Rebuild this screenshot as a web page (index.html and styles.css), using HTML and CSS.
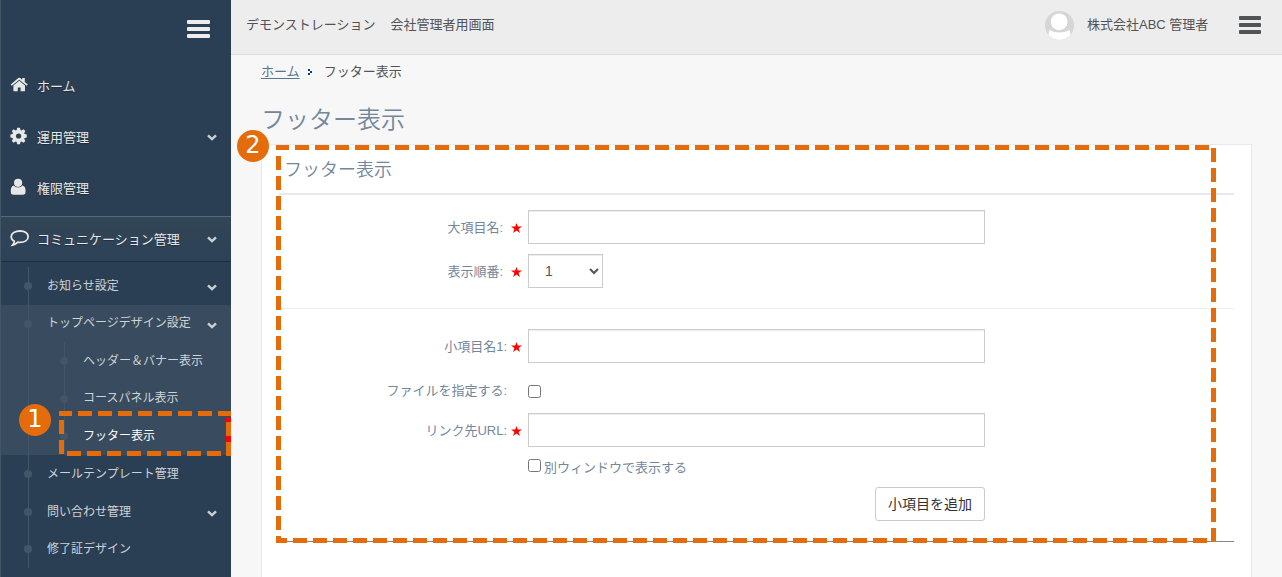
FILE: index.html
```html
<!DOCTYPE html>
<html lang="ja">
<head>
  <meta charset="UTF-8">
  <meta name="viewport" content="width=device-width, initial-scale=1.0">
  <title>フッター表示</title>
  <link rel="stylesheet" href="styles.css">
</head>
<body>
  <svg class="defs" width="0" height="0">
    <symbol id="chevron" viewBox="0 0 10 7"><path d="M1 1.4 L5 5.2 L9 1.4" fill="none" stroke="currentColor" stroke-width="2.4"/></symbol>
    <symbol id="star" viewBox="0 0 11 10"><path fill="red" d="M5.5 0 L6.8 3.6 H11 L7.6 6 L8.9 10 L5.5 7.6 L2.1 10 L3.4 6 L0 3.6 H4.2 Z"/></symbol>
  </svg>
  <div class="container">
    <nav class="sidebar">
      <div class="nav-toggle"><span class="bars"><i></i><i></i><i></i></span></div>
      <ul class="side-menu">
        <li class="item">
          <svg class="icon" width="20" height="18" viewBox="0 0 20 18"><path fill="currentColor" d="M10.2 4.7 L16 9.5 V14.6 Q16 15.2 15.4 15.2 H11.6 V11.6 H8.8 V15.2 H5 Q4.4 15.2 4.4 14.6 V9.5 Z M9.2 2.1 Q10.2 1.3 11.2 2.1 L13.2 3.8 V2 H15.8 V6 L18.8 8.6 L17.7 9.8 L10.2 3.7 L2.8 9.8 L1.7 8.6 Z"/></svg>
          <span>ホーム</span>
        </li>
        <li class="item">
          <svg class="icon" width="20" height="18" viewBox="0 0 20 18"><path fill="currentColor" fill-rule="evenodd" d="M8.2 0.8 H11 L11.5 3 L12.6 3.4 L14.5 2.2 L16.4 4.1 L15.2 6 L15.7 7.1 L17.8 7.6 V10.4 L15.7 10.9 L15.2 12 L16.4 13.9 L14.5 15.8 L12.6 14.6 L11.5 15 L11 17.2 H8.2 L7.7 15 L6.6 14.6 L4.7 15.8 L2.8 13.9 L4 12 L3.5 10.9 L1.4 10.4 V7.6 L3.5 7.1 L4 6 L2.8 4.1 L4.7 2.2 L6.6 3.4 L7.7 3 Z M9.6 6.4 A2.6 2.6 0 1 0 9.6 11.6 A2.6 2.6 0 1 0 9.6 6.4 Z"/></svg>
          <span>運用管理</span>
          <svg class="chevron" width="10" height="7"><use href="#chevron"/></svg>
        </li>
        <li class="item">
          <svg class="icon" width="20" height="18" viewBox="0 0 20 18"><path fill="currentColor" d="M4.6 7.6 Q6.6 9.6 9.1 9.6 Q11.6 9.6 13.6 7.6 Q16.7 8.4 16.6 13.4 Q16.4 16.6 14 16.8 H4.4 Q1.8 16.5 1.8 13.4 Q1.7 8.4 4.6 7.6 Z"/><circle cx="9.1" cy="4.8" r="4.1" fill="currentColor"/></svg>
          <span>権限管理</span>
        </li>
        <li class="item active">
          <svg class="icon" width="20" height="18" viewBox="0 0 20 18"><path fill="none" stroke="currentColor" stroke-width="1.8" d="M11 2 C15.8 2 19.1 4.3 19.1 7.7 C19.1 11.1 15.8 13.4 11 13.4 Q9.8 13.4 8.8 13.2 Q6.6 15.6 3.6 16 Q5.2 14.2 5.3 12.2 Q2.2 10.5 2.2 7.7 C2.2 4.3 6.2 2 11 2 Z"/></svg>
          <span>コミュニケーション管理</span>
          <svg class="chevron" width="10" height="7"><use href="#chevron"/></svg>
        </li>
      </ul>
      <ul class="child-menu">
        <li>お知らせ設定 <svg class="chevron" width="10" height="7"><use href="#chevron"/></svg></li>
        <li class="open">トップページデザイン設定 <svg class="chevron" width="10" height="7"><use href="#chevron"/></svg></li>
        <li class="open nested">
          <ul class="grandchild-menu">
            <li>ヘッダー＆バナー表示</li>
            <li>コースパネル表示</li>
            <li class="current">フッター表示</li>
          </ul>
        </li>
        <li>メールテンプレート管理</li>
        <li>問い合わせ管理 <svg class="chevron" width="10" height="7"><use href="#chevron"/></svg></li>
        <li>修了証デザイン</li>
      </ul>
    </nav>

    <div class="main">
      <header class="top-nav">
        <div class="site-name"><span>デモンストレーション</span><span>会社管理者用画面</span></div>
        <svg class="avatar" width="29" height="29" viewBox="0 0 29 29">
          <circle cx="14.5" cy="14.5" r="14.5" fill="#d6d6d6"/>
          <path fill="#fff" d="M4.4 19 Q9 21.5 14.5 21.5 Q20 21.5 24.6 19 L25.6 23.8 A14.5 14.5 0 0 1 3.4 23.8 Z"/>
          <circle cx="14.1" cy="10.8" r="9.2" fill="#fff" stroke="#d6d6d6" stroke-width="1.6"/>
        </svg>
        <div class="user-name">株式会社ABC 管理者</div>
        <span class="bars dark"><i></i><i></i><i></i></span>
      </header>

      <div class="content">
        <div class="breadcrumb">
          <a>ホーム</a>
          <svg width="5" height="6" viewBox="0 0 5 6" shape-rendering="crispEdges"><path fill="#003b7d" d="M0 0h2v2h-2z M2 2h2v2h-2z M0 4h2v2h-2z"/></svg>
          <span>フッター表示</span>
        </div>
        <h1 class="page-title">フッター表示</h1>
        <div class="panel">
          <h2 class="panel-title">フッター表示</h2>
          <form class="footer-form">
            <div class="form-row">
              <label class="wide-gap" for="mainItem">大項目名:</label>
              <svg class="star" width="11" height="10"><use href="#star"/></svg>
              <input type="text" id="mainItem" class="text-input">
            </div>
            <div class="form-row">
              <label class="wide-gap" for="sortOrder">表示順番:</label>
              <svg class="star" width="11" height="10"><use href="#star"/></svg>
              <select id="sortOrder" class="order-select"><option>1</option></select>
            </div>
            <hr class="divider">
            <div class="form-row">
              <label for="subItem">小項目名1:</label>
              <svg class="star" width="11" height="10"><use href="#star"/></svg>
              <input type="text" id="subItem" class="text-input">
            </div>
            <div class="form-row check-row">
              <label for="useFile">ファイルを指定する:</label>
              <span></span>
              <input type="checkbox" id="useFile" class="check">
            </div>
            <div class="form-row">
              <label for="linkUrl">リンク先URL:</label>
              <svg class="star" width="11" height="10"><use href="#star"/></svg>
              <input type="text" id="linkUrl" class="text-input">
            </div>
            <div class="window-row">
              <input type="checkbox" id="newWindow" class="check"><label for="newWindow">別ウィンドウで表示する</label>
            </div>
            <div class="button-row"><button type="button" class="add-button">小項目を追加</button></div>
            <hr class="divider bottom">
          </form>
        </div>
      </div>
    </div>
  </div>

  <!-- 説明用の枠と番号 -->
  <svg class="guide" width="1282" height="577" fill="none" stroke="#e46c0a" stroke-width="5">
    <path stroke="red" d="M228.5 417.5 V442"/>
    <g stroke-dasharray="14 6">
      <path stroke-dashoffset="1" d="M59 413.5 H231"/>
      <path d="M61.5 420 V454"/>
      <path d="M67 453.5 H226"/>
      <path d="M228.5 422 V456"/>
      <path stroke-dashoffset="1" d="M276 147.5 H1210"/>
      <path d="M1213.5 148 V542"/>
      <path stroke-dashoffset="3" d="M276 540.5 H1210"/>
      <path d="M278.5 156 V543"/>
    </g>
  </svg>
  <div class="badge badge-1">1</div>
  <div class="badge badge-2">2</div>
</body>
</html>
```
FILE: styles.css
```css
* {
  box-sizing: border-box;
}
body {
  margin: 0;
  height: 577px;
  overflow: hidden;
  position: relative;
  font-family: "Liberation Sans", "Noto Sans CJK JP", sans-serif;
  font-size: 13px;
  color: #73879c;
  background-color: #f7f7f7;
}
ul {
  list-style: none;
  margin: 0;
  padding: 0;
}
.defs {
  position: absolute;
}
.container {
  display: flex;
  height: 577px;
}

/* サイドバー */
.sidebar {
  width: 231px;
  flex: none;
  background-color: #2a3f54;
  border-left: 1px solid #435668;
  color: #e7e7e7;
}
.nav-toggle {
  display: flex;
  justify-content: flex-end;
  height: 63px;
  padding: 20px 21px 0 0;
}
.bars {
  display: flex;
  flex-direction: column;
  gap: 3px;
  width: 23px;
}
.bars i {
  height: 4px;
  border-radius: 1px;
  background-color: #ececec;
}
.bars.dark {
  width: 22px;
}
.bars.dark i {
  background-color: #515356;
}
.item {
  display: flex;
  align-items: center;
  height: 46px;
  margin-bottom: 5px;
  padding: 0 14px 0 8px;
  text-shadow: 0 1px 1px rgba(0, 0, 0, 0.3);
}
.item .icon {
  margin-right: 8px;
  margin-top: -2px;
}
.item span {
  margin-top: -2px;
}
.item.active {
  margin-bottom: 0;
  border-top: 1px solid #56697a;
  border-bottom: 1px solid #1d3145;
  background: linear-gradient(#334556, #2c4257);
}
.chevron {
  margin-left: auto;
  color: #c9d0d6;
}
.child-menu {
  margin-top: 5px;
  color: #ced3d8;
  font-size: 12px;
  position: relative;
}
.child-menu li {
  display: flex;
  align-items: center;
  height: 37.5px;
  padding: 0 14px 3px 46px;
  position: relative;
}
.child-menu li .chevron {
  margin-top: 7px;
}
.child-menu li.open {
  background-color: #394b5e;
}
.child-menu li.nested {
  display: block;
  height: 113.4px;
  padding: 0;
}
.grandchild-menu li {
  padding-left: 82px;
}
.grandchild-menu li.current {
  color: #fff;
}
/* ツリーの縦線と丸 */
.child-menu::before,
.grandchild-menu::before {
  content: "";
  position: absolute;
  z-index: 1;
  left: 27px;
  top: 0;
  bottom: 0;
  width: 1px;
  background-color: #425668;
}
.grandchild-menu::before {
  left: 63px;
}
.child-menu li:not(.nested)::before {
  content: "";
  position: absolute;
  z-index: 2;
  left: 23px;
  top: 15px;
  width: 8px;
  height: 8px;
  border-radius: 50%;
  background-color: #425668;
}
.grandchild-menu li:not(.nested)::before {
  left: 59px;
}

/* ヘッダー */
.main {
  flex: 1;
}
.top-nav {
  display: flex;
  align-items: center;
  height: 55px;
  padding: 0 21px 5px 15px;
  background-color: #ededed;
  border-bottom: 1px solid #d9dee4;
  color: #515356;
}
.site-name {
  display: flex;
  gap: 15px;
  margin-top: -2px;
}
.avatar {
  margin-left: auto;
  margin-right: 13px;
  margin-top: 1px;
}
.user-name {
  width: 122px;
  margin-right: 30px;
  margin-top: -2px;
  white-space: nowrap;
}
.content {
  padding: 0 30px;
}
.breadcrumb {
  display: flex;
  align-items: center;
  height: 33px;
  padding-bottom: 2px;
  color: #515356;
}
.breadcrumb a {
  color: #5a738e;
  text-decoration: underline;
  text-underline-offset: 2px;
}
.breadcrumb svg {
  margin: 2px 11px 0 8px;
}
.page-title {
  height: 56px;
  margin: 0;
  padding-top: 15px;
  font-size: 24px;
  font-weight: 350;
  line-height: 34px;
}
.panel {
  width: 991px;
  height: 460px;
  padding: 0 17px;
  background-color: #fff;
  border: 1px solid #e6e9ed;
}
.panel-title {
  height: 50px;
  margin: 0;
  padding: 10px 0 0 5px;
  border-bottom: 2px solid #e6e9ed;
  font-size: 18px;
  font-weight: 350;
  line-height: 30px;
}

/* フォーム */
.footer-form {
  padding-top: 15px;
}
.form-row {
  display: grid;
  grid-template-columns: 228px 11px 1fr;
  align-items: center;
  column-gap: 4px;
  height: 34px;
  margin-bottom: 10px;
}
.form-row label {
  padding-bottom: 2px;
  text-align: right;
  white-space: nowrap;
}
.form-row label.wide-gap {
  padding-right: 4px;
}
.star {
  margin-top: 1px;
}
.text-input,
.order-select {
  width: 457px;
  height: 34px;
  margin-left: 2px;
  padding: 6px 12px;
  border: 1px solid #ccc;
  border-radius: 0;
  background-color: #fff;
  box-shadow: inset 0 1px 1px rgba(0, 0, 0, 0.075);
  color: #555;
  font-family: inherit;
  font-size: 14px;
}
.order-select {
  width: 75px;
  padding: 0 1px 0 12px;
}
.divider {
  height: 1px;
  margin: 20px 0;
  border: 0;
  background-color: #eee;
}
.divider.bottom {
  background-color: #858585;
}
.form-row.check-row {
  height: 30px;
}
.check-row label {
  padding: 2px 0 0;
}
.check {
  width: 13px;
  height: 13px;
  margin: 0;
}
.check-row .check {
  margin: 6px 0 0 2px;
}
.window-row {
  display: flex;
  align-items: center;
  gap: 3px;
  height: 20px;
  padding-left: 249px;
}
.window-row .check {
  margin-bottom: 3px;
}
.window-row label {
  margin-top: -2px;
}
.button-row {
  width: 706px;
  padding-top: 10px;
  text-align: right;
}
.add-button {
  width: 110px;
  height: 34px;
  padding: 0 0 2px;
  display: inline-block;
  vertical-align: top;
  border: 1px solid #ccc;
  border-radius: 3px;
  background-color: #fff;
  color: #333;
  font-family: inherit;
  font-size: 14px;
}

/* 説明用の枠と番号 */
.guide {
  position: absolute;
  z-index: 5;
  left: 0;
  top: 0;
  pointer-events: none;
}
.badge {
  position: absolute;
  z-index: 6;
  width: 32px;
  height: 32px;
  border-radius: 50%;
  background-color: #e46c0a;
  color: #fff;
  font-family: "DejaVu Sans", sans-serif;
  font-size: 24px;
  line-height: 31px;
  text-align: center;
}
.badge-1 {
  left: 19px;
  top: 404px;
}
.badge-2 {
  left: 237px;
  top: 130px;
}
```
